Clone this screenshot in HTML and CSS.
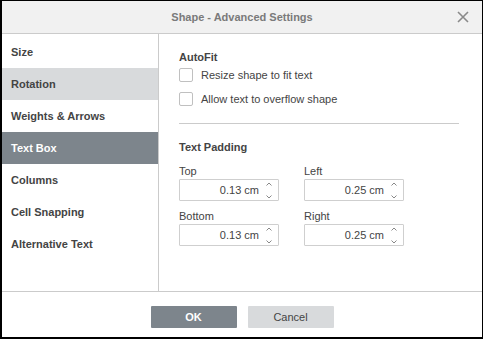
FILE: index.html
```html
<!DOCTYPE html>
<html>
<head>
<meta charset="utf-8">
<link rel="stylesheet" href="styles.css">
</head>
<body>
<div class="dialog">
  <div class="header">
    <span class="title">Shape - Advanced Settings</span>
    <svg class="close" width="12" height="12" viewBox="0 0 12 12"><path d="M1 1L11 11M11 1L1 11" stroke="#8a8a8a" stroke-width="1.6" fill="none"/></svg>
  </div>
  <div class="main">
    <div class="sidebar">
      <div class="cat">Size</div>
      <div class="cat light">Rotation</div>
      <div class="cat">Weights &amp; Arrows</div>
      <div class="cat active">Text Box</div>
      <div class="cat">Columns</div>
      <div class="cat">Cell Snapping</div>
      <div class="cat">Alternative Text</div>
    </div>
    <div class="content">
      <div class="label">AutoFit</div>
      <div class="check first"><span class="box"></span><span>Resize shape to fit text</span></div>
      <div class="check"><span class="box"></span><span>Allow text to overflow shape</span></div>
      <div class="sep"></div>
      <div class="label">Text Padding</div>
      <div class="grid">
        <div class="field">
          <div class="flabel">Top</div>
          <div class="input"><span class="val">0.13 cm</span><svg class="spin" width="6" height="17" viewBox="0 0 6 17"><path d="M0.5 3.5L3 1L5.5 3.5M0.5 13.5L3 16L5.5 13.5" stroke="#888" stroke-width="1" fill="none"/></svg></div>
        </div>
        <div class="field">
          <div class="flabel">Left</div>
          <div class="input"><span class="val">0.25 cm</span><svg class="spin" width="6" height="17" viewBox="0 0 6 17"><path d="M0.5 3.5L3 1L5.5 3.5M0.5 13.5L3 16L5.5 13.5" stroke="#888" stroke-width="1" fill="none"/></svg></div>
        </div>
        <div class="field">
          <div class="flabel">Bottom</div>
          <div class="input"><span class="val">0.13 cm</span><svg class="spin" width="6" height="17" viewBox="0 0 6 17"><path d="M0.5 3.5L3 1L5.5 3.5M0.5 13.5L3 16L5.5 13.5" stroke="#888" stroke-width="1" fill="none"/></svg></div>
        </div>
        <div class="field">
          <div class="flabel">Right</div>
          <div class="input"><span class="val">0.25 cm</span><svg class="spin" width="6" height="17" viewBox="0 0 6 17"><path d="M0.5 3.5L3 1L5.5 3.5M0.5 13.5L3 16L5.5 13.5" stroke="#888" stroke-width="1" fill="none"/></svg></div>
        </div>
      </div>
    </div>
  </div>
  <div class="footer">
    <button class="btn primary">OK</button>
    <button class="btn">Cancel</button>
  </div>
</div>
</body>
</html>
```
FILE: styles.css
```css
* { box-sizing: border-box; }
html, body { margin: 0; padding: 0; background: #fff; }
body { font-family: "Liberation Sans", Arial, sans-serif; font-size: 11px; color: #444; }
.dialog {
  width: 483px; height: 339px;
  border-style: solid; border-color: #000;
  border-width: 1px 1px 2px 2px;
  display: flex; flex-direction: column;
  background: #fff;
}
.header {
  height: 33px; flex: none;
  background: #f1f1f1;
  border-bottom: 1px solid #cbcbcb;
  position: relative;
  display: flex; align-items: center; justify-content: center;
}
.title { font-weight: bold; font-size: 11px; color: #7a7a7a; line-height: 14px; }
.close { position: absolute; right: 13px; top: 10px; }
.main { height: 257px; flex: none; display: flex; }
.sidebar {
  width: 157px; flex: none;
  border-right: 1px solid #cbcbcb;
  padding-top: 2px;
}
.cat {
  height: 32px; line-height: 32px;
  padding-left: 9px;
  font-weight: bold; color: #444;
}
.cat.light { background: #d8dadc; }
.cat.active { background: #7d858c; color: #fff; }
.content { flex: 1; padding: 16px 0 0 20px; }
.label { font-weight: bold; line-height: 14px; }
.check { display: flex; align-items: center; height: 14px; line-height: 14px; margin-top: 10px; }
.check.first { margin-top: 4px; }
.box {
  width: 14px; height: 14px; flex: none;
  border: 1px solid #c0c0c0; border-radius: 2px;
  margin-right: 8px; background: #fff;
}
.sep { width: 280px; height: 1px; background: #cbcbcb; margin: 17px 0 16px; }
.grid { display: grid; grid-template-columns: 100px 100px; column-gap: 25px; row-gap: 8px; margin-top: 10px; }
.flabel { line-height: 14px; margin-bottom: 1px; }
.input {
  height: 22px; border: 1px solid #cfcfcf; border-radius: 1px;
  display: flex; align-items: center; justify-content: flex-end;
  padding-right: 6px;
}
.val { margin-right: 7px; color: #444; }
.spin { display: block; }
.footer {
  flex: 1;
  border-top: 1px solid #cbcbcb;
  display: flex; justify-content: center; align-items: flex-start;
  padding-top: 14px; gap: 11px;
}
.btn {
  width: 86px; height: 22px; border: none; border-radius: 1px;
  font-family: "Liberation Sans", Arial, sans-serif; font-size: 11px;
  background: #d8dadc; color: #444; padding: 0;
}
.btn.primary { background: #7d858c; color: #fff; font-weight: bold; }
```
